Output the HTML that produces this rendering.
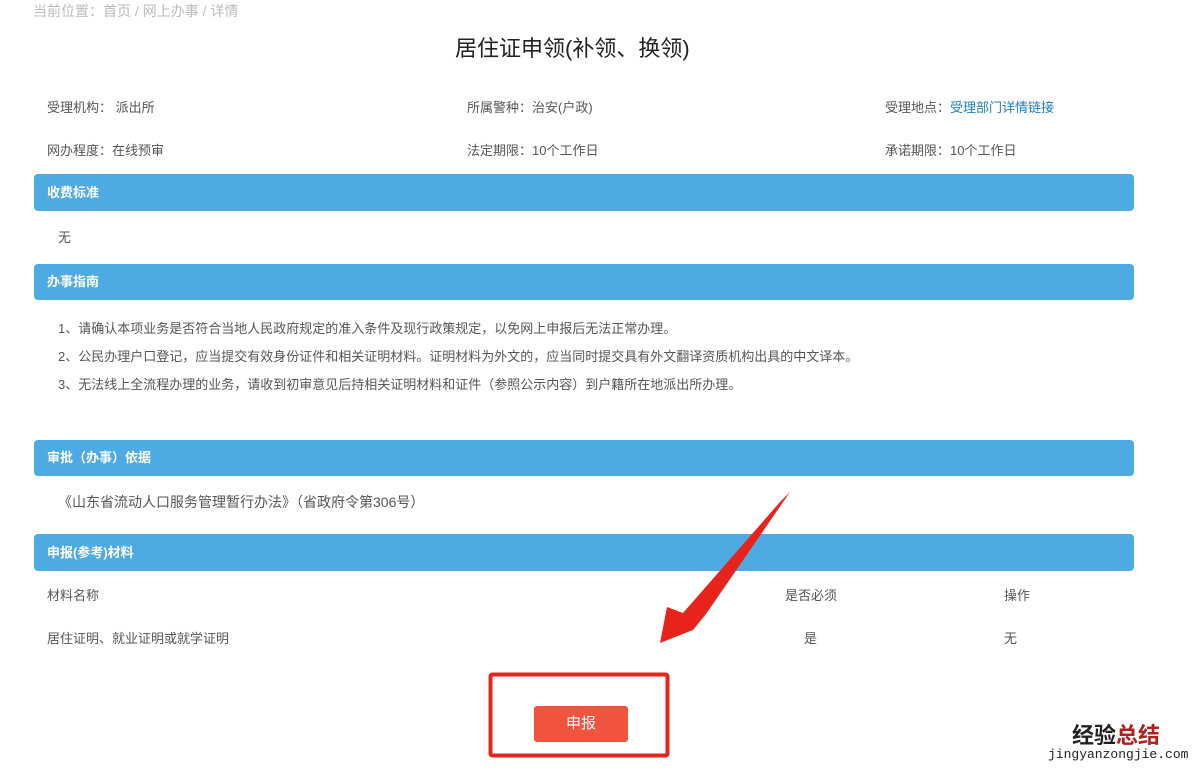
<!DOCTYPE html>
<html><head><meta charset="utf-8"><style>
body{margin:0;width:1200px;height:770px;background:#fff;position:relative;overflow:hidden;font-family:"Liberation Sans","Noto Sans CJK SC",sans-serif;color:#555;font-size:13px}
.a{position:absolute;white-space:nowrap}
.bar{position:absolute;left:34px;width:1100px;background:#4eaae2;border-radius:4px;color:#fff;font-weight:bold;font-size:13px;box-sizing:border-box;padding-left:13px}
</style></head><body>
<div class="a" style="left:33px;top:1px;font-size:14px;color:#bbb">当前位置：首页 / 网上办事 / 详情</div>
<div class="a" style="left:455px;top:31px;font-size:22px;color:#222">居住证申领(补领、换领)</div>
<div class="a" style="left:47px;top:97px">受理机构： 派出所</div>
<div class="a" style="left:467px;top:97px">所属警种：治安(户政)</div>
<div class="a" style="left:885px;top:97px">受理地点：<span style="color:#1a7fc1">受理部门详情链接</span></div>
<div class="a" style="left:47px;top:140px">网办程度：在线预审</div>
<div class="a" style="left:467px;top:140px">法定期限：10个工作日</div>
<div class="a" style="left:885px;top:140px">承诺期限：10个工作日</div>
<div class="bar" style="top:174px;height:37px;line-height:37px">收费标准</div>
<div class="a" style="left:58px;top:227px">无</div>
<div class="bar" style="top:264px;height:36px;line-height:36px">办事指南</div>
<div class="a" style="left:58px;top:318px">1、请确认本项业务是否符合当地人民政府规定的准入条件及现行政策规定，以免网上申报后无法正常办理。</div>
<div class="a" style="left:58px;top:346px">2、公民办理户口登记，应当提交有效身份证件和相关证明材料。证明材料为外文的，应当同时提交具有外文翻译资质机构出具的中文译本。</div>
<div class="a" style="left:58px;top:374px">3、无法线上全流程办理的业务，请收到初审意见后持相关证明材料和证件（参照公示内容）到户籍所在地派出所办理。</div>
<div class="bar" style="top:440px;height:36px;line-height:36px">审批（办事）依据</div>
<div class="a" style="left:58px;top:492px;font-size:14px">《山东省流动人口服务管理暂行办法》（省政府令第306号）</div>
<div class="bar" style="top:534px;height:37px;line-height:37px">申报(参考)材料</div>
<div class="a" style="left:47px;top:585px">材料名称</div>
<div class="a" style="left:785px;top:585px">是否必须</div>
<div class="a" style="left:1004px;top:585px">操作</div>
<div class="a" style="left:47px;top:628px">居住证明、就业证明或就学证明</div>
<div class="a" style="left:804px;top:628px">是</div>
<div class="a" style="left:1004px;top:628px">无</div>
<svg class="a" style="left:0;top:0" width="1200" height="770">
<path d="M790,492 L706,614 L693,630 L660,643 L667,607 L683,613 L780,502 Z" fill="#e8231c"/>
<rect x="490.5" y="674.5" width="177" height="81" fill="none" stroke="#e8231c" stroke-width="4" rx="2"/>
</svg>
<div class="a" style="left:534px;top:706px;width:94px;height:36px;background:#f0533e;border-radius:3px;color:#fff;font-size:15px;text-align:center;line-height:36px">申报</div>
<div class="a" style="left:1072px;top:718px;font-size:22px;font-weight:bold;color:#222">经验<span style="color:#b32020">总结</span></div>
<div class="a" style="left:1048px;top:747px;font-size:13px;color:#222;font-family:'Liberation Mono',monospace">jingyanzongjie.com</div>
</body></html>
